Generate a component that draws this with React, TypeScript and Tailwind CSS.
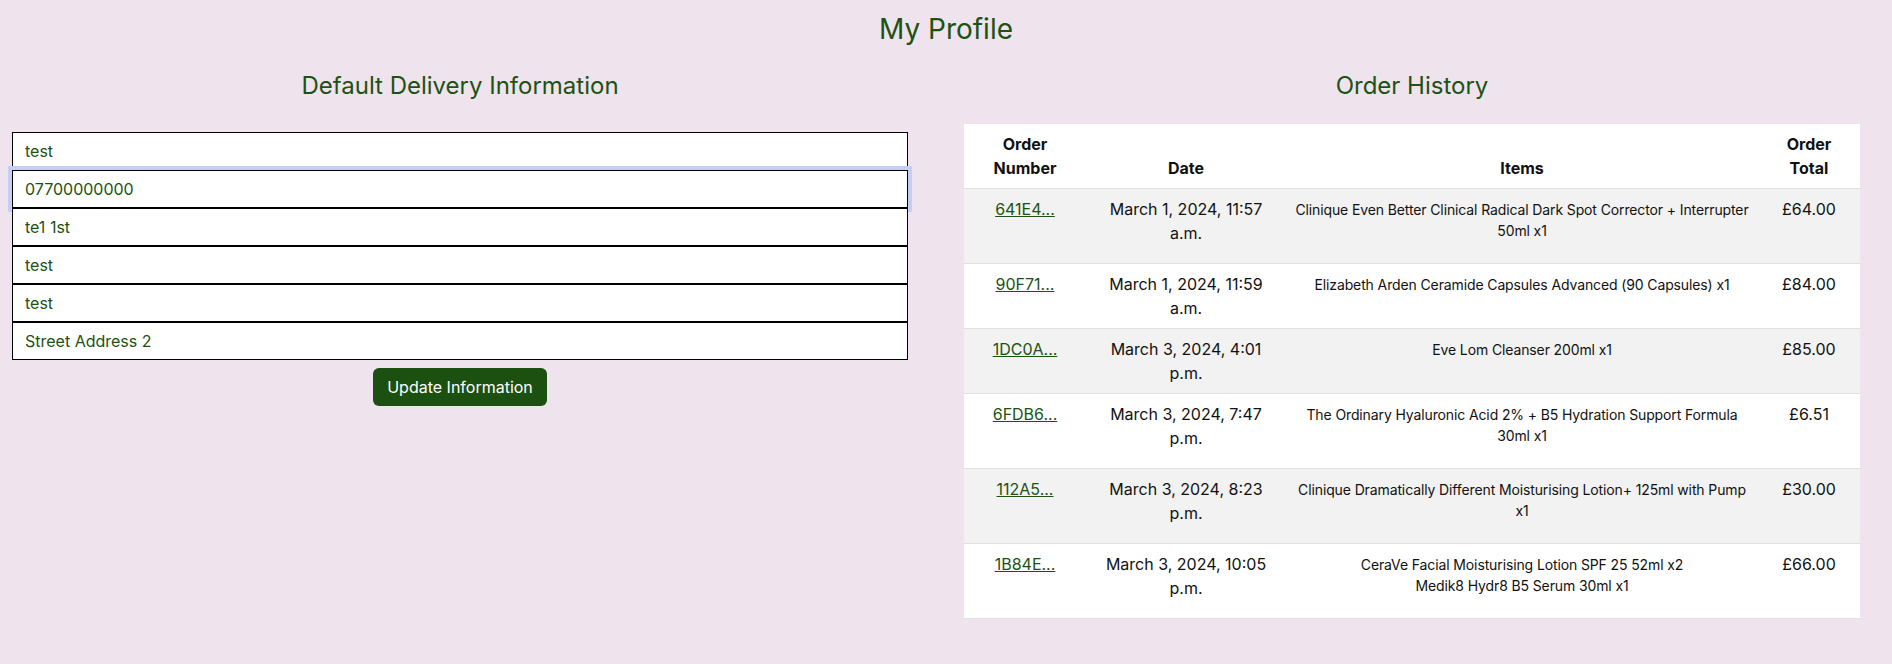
import React from 'react';

interface Order {
  id: string;
  date: string;
  items: string[];
  total: string;
}

const orders: Order[] = [
  {
    id: '641E4...',
    date: 'March 1, 2024, 11:57 a.m.',
    items: ['Clinique Even Better Clinical Radical Dark Spot Corrector + Interrupter 50ml x1'],
    total: '£64.00',
  },
  {
    id: '90F71...',
    date: 'March 1, 2024, 11:59 a.m.',
    items: ['Elizabeth Arden Ceramide Capsules Advanced (90 Capsules) x1'],
    total: '£84.00',
  },
  {
    id: '1DC0A...',
    date: 'March 3, 2024, 4:01 p.m.',
    items: ['Eve Lom Cleanser 200ml x1'],
    total: '£85.00',
  },
  {
    id: '6FDB6...',
    date: 'March 3, 2024, 7:47 p.m.',
    items: ['The Ordinary Hyaluronic Acid 2% + B5 Hydration Support Formula 30ml x1'],
    total: '£6.51',
  },
  {
    id: '112A5...',
    date: 'March 3, 2024, 8:23 p.m.',
    items: ['Clinique Dramatically Different Moisturising Lotion+ 125ml with Pump x1'],
    total: '£30.00',
  },
  {
    id: '1B84E...',
    date: 'March 3, 2024, 10:05 p.m.',
    items: ['CeraVe Facial Moisturising Lotion SPF 25 52ml x2', 'Medik8 Hydr8 B5 Serum 30ml x1'],
    total: '£66.00',
  },
];

const fields = ['test', '07700000000', 'te1 1st', 'test', 'test', 'Street Address 2'];

const App: React.FC = () => {
  return (
    <div className="min-h-screen bg-[#efe3ee] font-['Inter',sans-serif] text-[#1c5212]">
      <h1 className="pt-[12px] text-center text-[28px] leading-[34px] font-normal">My Profile</h1>

      <div className="mt-[25px] grid grid-cols-[896px_896px] gap-[56px] pl-[12px]">
        {/* delivery info */}
        <div>
          <h4 className="text-center text-[24px] leading-[29px] font-normal">Default Delivery Information</h4>
          <form className="mt-[32px] flex flex-col" onSubmit={(e) => e.preventDefault()}>
            {fields.map((value, i) => (
              <input
                key={i}
                defaultValue={value}
                className={
                  'block h-[38px] w-full border border-black bg-white px-[12px] text-[16px] leading-[24px] text-[#1c5212] outline-none' +
                  (i === 1 ? ' border-[#1d1d3a] shadow-[0_0_0_4px_#c6cef3]' : '')
                }
              />
            ))}
            <div className="mt-[8px] flex justify-center">
              <button
                type="submit"
                className="h-[38px] rounded-[6px] bg-[#1b5010] px-[14px] text-[16px] leading-[24px] text-white"
              >
                Update Information
              </button>
            </div>
          </form>
        </div>

        {/* order history */}
        <div>
          <h4 className="text-center text-[24px] leading-[29px] font-normal">Order History</h4>
          <table className="mt-[24px] w-full table-fixed border-collapse bg-white text-[16px] leading-[24px] text-[#111]">
            <colgroup>
              <col className="w-[122px]" />
              <col className="w-[200px]" />
              <col />
              <col className="w-[102px]" />
            </colgroup>
            <thead>
              <tr className="border-b border-[#dee2e6] align-bottom">
                <th className="p-[8px] font-bold">Order Number</th>
                <th className="p-[8px] font-bold">Date</th>
                <th className="p-[8px] font-bold">Items</th>
                <th className="p-[8px] font-bold">Order Total</th>
              </tr>
            </thead>
            <tbody>
              {orders.map((o, i) => (
                <tr key={o.id} className={'border-b border-[#dee2e6] ' + (i % 2 === 0 ? 'bg-[#f2f2f2]' : 'bg-white')}>
                  <td className="p-[8px] text-center align-top">
                    <a href="#" className="text-[#1c5212] underline">
                      {o.id}
                    </a>
                  </td>
                  <td className="px-[18px] py-[8px] text-center align-top">{o.date}</td>
                  <td className="px-[8px] pt-[10px] pb-[6px] text-center align-top">
                    <p className="mb-[16px] text-[14px] leading-[21px] tracking-[-0.12px]">
                      {o.items.map((it, j) => (
                        <React.Fragment key={j}>
                          {j > 0 && <br />}
                          {it}
                        </React.Fragment>
                      ))}
                    </p>
                  </td>
                  <td className="p-[8px] text-center align-top">{o.total}</td>
                </tr>
              ))}
            </tbody>
          </table>
        </div>
      </div>
    </div>
  );
};

export default App;
